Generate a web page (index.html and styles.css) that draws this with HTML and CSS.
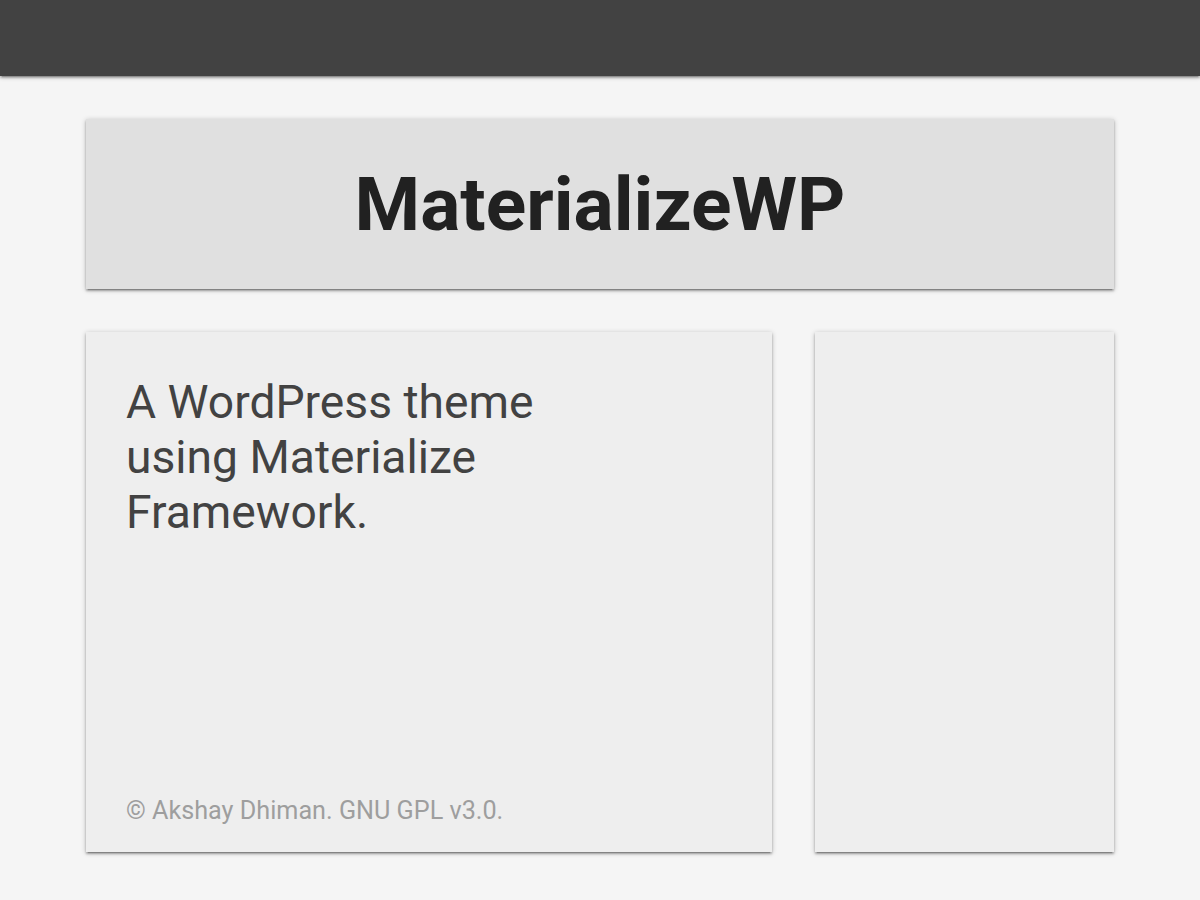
FILE: index.html
```html
<!DOCTYPE html>
<html lang="en">
<head>
<meta charset="utf-8">
<title>MaterializeWP</title>
<link rel="stylesheet" href="styles.css">
</head>
<body>
<nav class="topbar"></nav>
<main class="container">
  <header class="card header-card">
    <h1 class="site-title">MaterializeWP</h1>
  </header>
  <div class="row">
    <section class="card main-card">
      <h2 class="tagline">A WordPress theme using Materialize Framework.</h2>
      <p class="credits">© Akshay Dhiman. GNU GPL v3.0.</p>
    </section>
    <aside class="card side-card"></aside>
  </div>
</main>
</body>
</html>
```
FILE: styles.css
```css
html, body {
  margin: 0;
  padding: 0;
}
body {
  background: #f5f5f5;
  font-family: Roboto, "Noto Sans", sans-serif;
  height: 900px;
  overflow: hidden;
}
.topbar {
  height: 76px;
  background: #424242;
  box-shadow: 0 2px 2px 0 rgba(0,0,0,.2), 0 3px 1px -2px rgba(0,0,0,.16), 0 1px 5px 0 rgba(0,0,0,.24);
  position: relative;
  z-index: 2;
}
.container {
  width: 1028px;
  margin: 43px auto 0;
  display: flex;
  flex-direction: column;
  gap: 43px;
}
.card {
  box-shadow: 0 2px 2px 0 rgba(0,0,0,.24), 0 3px 1px -2px rgba(0,0,0,.2), 0 1px 5px 0 rgba(0,0,0,.24);
}
.header-card {
  height: 170px;
  background: #e0e0e0;
  display: flex;
  align-items: center;
  justify-content: center;
}
.site-title {
  margin: 0;
  font-size: 75px;
  font-weight: 700;
  color: #212121;
  line-height: 1;
}
.row {
  display: flex;
  gap: 43px;
  height: 520px;
}
.main-card {
  width: 686px;
  background: #eeeeee;
  box-sizing: border-box;
  padding: 43px 40px 26px;
  display: flex;
  flex-direction: column;
}
.tagline {
  margin: 0;
  max-width: 460px;
  font-size: 46.2px;
  font-weight: 400;
  line-height: 55px;
  color: #424242;
}
.credits {
  margin: auto 0 0;
  font-size: 25.2px;
  line-height: 30px;
  color: #9e9e9e;
}
.side-card {
  flex: 1;
  background: #eeeeee;
}
```
